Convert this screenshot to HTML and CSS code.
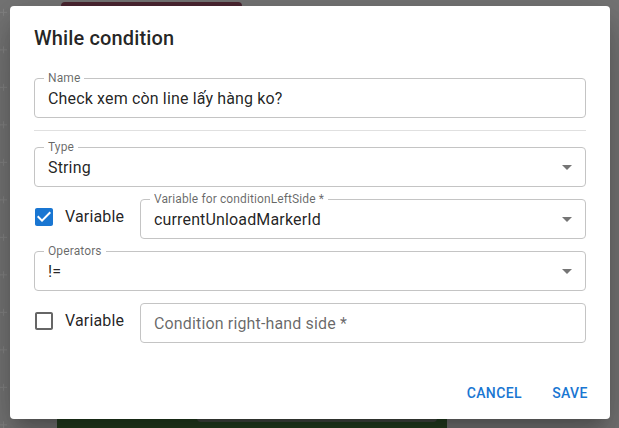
FILE: index.html
```html
<!DOCTYPE html>
<html lang="vi">
<head>
<meta charset="utf-8">
<title>While condition</title>
<link rel="stylesheet" href="styles.css">
</head>
<body>
  <div class="bg-plus"></div>
  <div class="bg-red"></div>
  <div class="bg-green"></div>
  <div class="bg-green-inner"></div>

  <div class="dialog" role="dialog">
    <h2 class="title">While condition</h2>
    <div class="content">
      <div class="field name-field">
        <span class="label">Name</span>
        <span class="value">Check xem còn line lấy hàng ko?</span>
      </div>
      <div class="divider"></div>
      <div class="stack">
        <div class="field">
          <span class="label">Type</span>
          <span class="value">String</span>
          <svg class="arrow" viewBox="0 0 24 24" width="24" height="24"><path d="M7 10l5 5 5-5z"/></svg>
        </div>
        <div class="row">
          <div class="check">
            <svg class="box checked" viewBox="0 0 24 24" width="24" height="24"><path d="M19 3H5c-1.11 0-2 .9-2 2v14c0 1.1.89 2 2 2h14c1.11 0 2-.9 2-2V5c0-1.1-.89-2-2-2zm-9 14l-5-5 1.41-1.41L10 14.17l7.59-7.59L19 8l-9 9z"/></svg>
            <span class="check-label">Variable</span>
          </div>
          <div class="field grow">
            <span class="label">Variable for conditionLeftSide *</span>
            <span class="value">currentUnloadMarkerId</span>
            <svg class="arrow" viewBox="0 0 24 24" width="24" height="24"><path d="M7 10l5 5 5-5z"/></svg>
          </div>
        </div>
        <div class="field">
          <span class="label">Operators</span>
          <span class="value">!=</span>
          <svg class="arrow" viewBox="0 0 24 24" width="24" height="24"><path d="M7 10l5 5 5-5z"/></svg>
        </div>
        <div class="row">
          <div class="check">
            <svg class="box" viewBox="0 0 24 24" width="24" height="24"><path d="M19 5v14H5V5h14m0-2H5c-1.1 0-2 .9-2 2v14c0 1.1.9 2 2 2h14c1.1 0 2-.9 2-2V5c0-1.1-.9-2-2-2z"/></svg>
            <span class="check-label">Variable</span>
          </div>
          <div class="field grow">
            <span class="value placeholder">Condition right-hand side *</span>
          </div>
        </div>
      </div>
    </div>
    <div class="actions">
      <button class="btn">Cancel</button>
      <button class="btn">Save</button>
    </div>
  </div>
</body>
</html>
```

FILE: styles.css
```css
html, body {
  margin: 0;
  padding: 0;
}

body {
  width: 619px;
  height: 428px;
  overflow: hidden;
  position: relative;
  background: #757575;
  padding: 6px 0 0 10px;
  box-sizing: border-box;
  font-family: Roboto, "Noto Sans", "Liberation Sans", sans-serif;
}

/* things behind the backdrop */
.bg-plus {
  position: absolute;
  left: 0;
  top: 0;
  width: 8px;
  height: 428px;
  background-image:
    linear-gradient(to bottom, transparent 9px, #838383 9px, #838383 16px, transparent 16px),
    linear-gradient(to bottom, transparent 12px, #838383 12px, #838383 13px, transparent 13px);
  background-size: 1px 37.5px, 7px 37.5px;
  background-position: 3px 0, 0 0;
  background-repeat: repeat-y, repeat-y;
}

.bg-red {
  position: absolute;
  left: 61px;
  top: 2px;
  width: 181px;
  height: 20px;
  background: #4b2631;
  border-radius: 4px 4px 0 0;
}

.bg-green {
  position: absolute;
  left: 57px;
  top: 400px;
  width: 390px;
  height: 40px;
  background: #243e20;
  border-radius: 4px;
}

.bg-green-inner {
  position: absolute;
  left: 197px;
  top: 400px;
  width: 240px;
  height: 22px;
  background: #454a44;
  border-radius: 0 0 4px 4px;
}

/* dialog */
.dialog {
  position: relative;
  width: 600px;
  height: 413px;
  background: #fff;
  border-radius: 4px;
  box-shadow: 0 11px 15px -7px rgba(0,0,0,.2), 0 24px 38px 3px rgba(0,0,0,.14), 0 9px 46px 8px rgba(0,0,0,.12);
  display: flex;
  flex-direction: column;
  box-sizing: border-box;
}

.title {
  margin: 0;
  padding: 16px 24px;
  font-size: 20px;
  line-height: 32px;
  font-weight: 500;
  letter-spacing: .0075em;
  color: rgba(0,0,0,.87);
}

.content {
  padding: 0 24px;
  display: flex;
  flex-direction: column;
}

.stack {
  display: flex;
  flex-direction: column;
  gap: 12px;
  margin-top: 16px;
}

.field {
  position: relative;
  height: 40px;
  box-sizing: border-box;
  border: 1px solid #c4c4c4;
  border-radius: 4px;
  display: flex;
  align-items: center;
  padding: 0 13px;
  font-size: 16px;
  letter-spacing: .00938em;
  color: rgba(0,0,0,.87);
}

.name-field {
  margin-top: 8px;
}

.value {
  flex: 1;
  white-space: nowrap;
  line-height: 23px;
}

.placeholder {
  color: rgba(0,0,0,.6);
}

.label {
  position: absolute;
  left: 9px;
  top: -7px;
  padding: 0 4px;
  background: #fff;
  font-size: 12px;
  line-height: 12px;
  letter-spacing: .00938em;
  color: rgba(0,0,0,.6);
  white-space: nowrap;
}

.arrow {
  flex: none;
  margin-right: -7px;
  fill: rgba(0,0,0,.54);
}

.divider {
  margin-top: 12px;
  height: 1px;
  background: #e0e0e0;
}

.row {
  display: flex;
  align-items: center;
}

.check {
  flex: none;
  width: 106px;
  display: flex;
  align-items: center;
  margin-bottom: 4px;
}

.box {
  flex: none;
  margin-left: -2px;
  fill: rgba(0,0,0,.6);
}

.box.checked {
  fill: #1976d2;
}

.check-label {
  margin-left: 9px;
  font-size: 16px;
  line-height: 24px;
  letter-spacing: .00938em;
  color: rgba(0,0,0,.87);
}

.grow {
  flex: 1;
}

.actions {
  margin-top: auto;
  display: flex;
  justify-content: flex-end;
  gap: 8px;
  padding: 8px;
}

.btn {
  font-family: Roboto, "Noto Sans", "Liberation Sans", sans-serif;
  font-size: 14px;
  font-weight: 500;
  line-height: 24.5px;
  letter-spacing: .02857em;
  text-transform: uppercase;
  color: #1976d2;
  background: none;
  border: 0;
  padding: 6px 8px;
  min-width: 64px;
  border-radius: 4px;
}
```
